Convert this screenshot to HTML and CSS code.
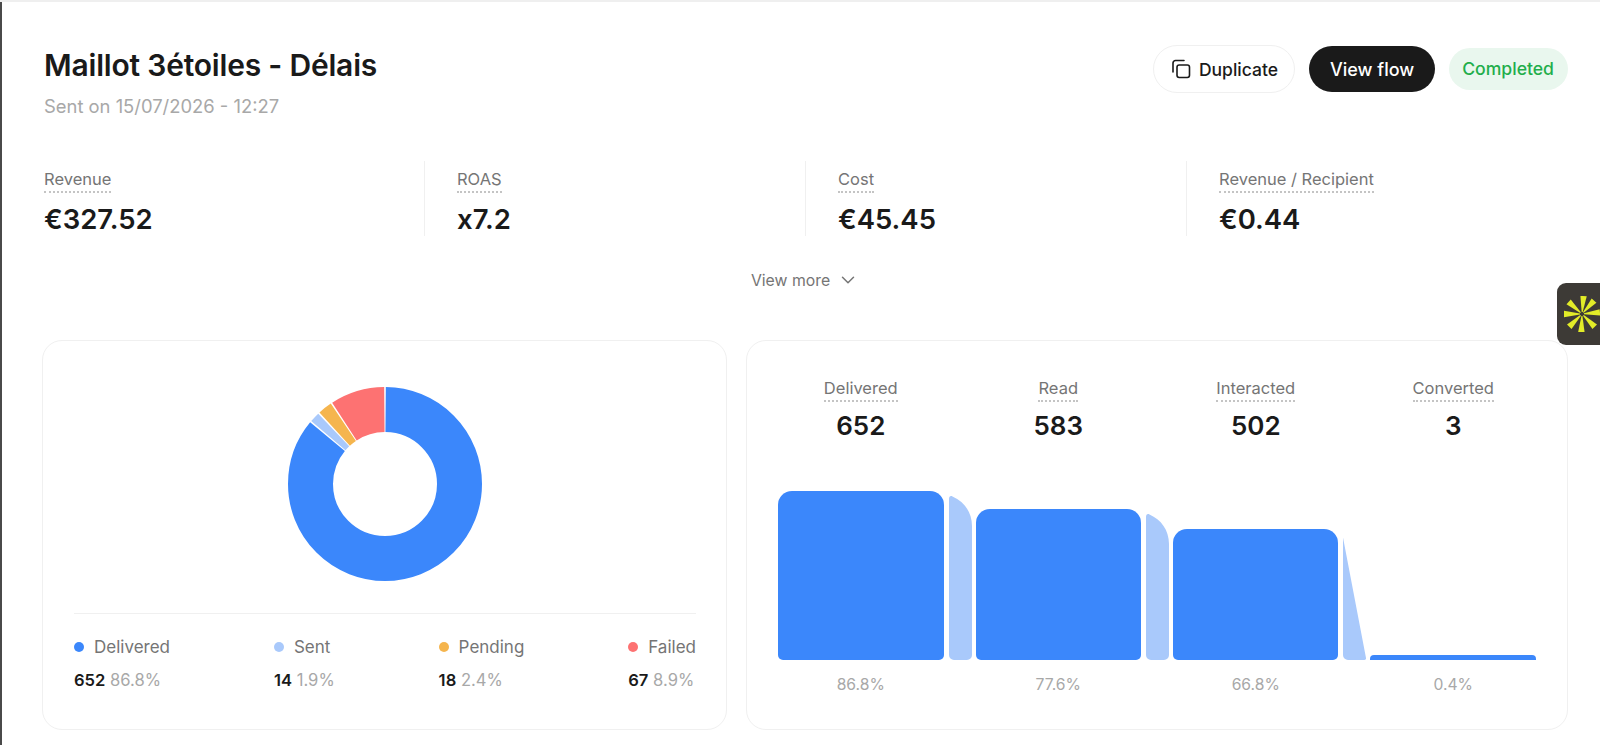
FILE: index.html
```html
<!DOCTYPE html>
<html lang="en">
<head>
    <meta charset="UTF-8">
    <meta name="viewport" content="width=device-width, initial-scale=1.0">
    <title>Maillot 3étoiles - Délais</title>
    <link rel="stylesheet" href="styles.css">
</head>
<body>
    <div class="page">
        <header class="campaign-header">
            <div>
                <h1>Maillot 3étoiles - Délais</h1>
                <p class="sent-on">Sent on 15/07/2026 - 12:27</p>
            </div>
            <div class="header-actions">
                <button class="btn btn-light">
                    <svg class="copy-icon" viewBox="0 0 20 20" fill="none" stroke="currentColor" stroke-width="1.6" stroke-linejoin="round" stroke-linecap="round">
                        <rect x="6" y="6" width="12.5" height="12.5" rx="2.2"></rect>
                        <path d="M2 13V4a2.5 2.5 0 0 1 2.5-2.5H13"></path>
                    </svg>
                    Duplicate
                </button>
                <button class="btn btn-dark">View flow</button>
                <span class="status-pill">Completed</span>
            </div>
        </header>

        <section class="stats">
            <div class="stat">
                <div><span class="dotted-label">Revenue</span></div>
                <div class="stat-value">€327.52</div>
            </div>
            <div class="stat">
                <div><span class="dotted-label">ROAS</span></div>
                <div class="stat-value">x7.2</div>
            </div>
            <div class="stat">
                <div><span class="dotted-label">Cost</span></div>
                <div class="stat-value">€45.45</div>
            </div>
            <div class="stat">
                <div><span class="dotted-label">Revenue / Recipient</span></div>
                <div class="stat-value">€0.44</div>
            </div>
        </section>

        <div class="view-more">
            View more
            <svg class="chevron" viewBox="0 0 14 8" fill="none" stroke="currentColor" stroke-width="1.5" stroke-linecap="round" stroke-linejoin="round">
                <path d="M1.5 1.2 7 6.7l5.5-5.5"></path>
            </svg>
        </div>

        <div class="cards">
            <section class="card card-donut">
                <svg class="donut" viewBox="0 0 194 194">
                    <g fill="none" stroke-width="45" transform="rotate(-90 97 97)">
                        <circle cx="97" cy="97" r="74.5" pathLength="360" stroke="#3b87fb" stroke-dasharray="309 51" stroke-dashoffset="-0.5"></circle>
                        <circle cx="97" cy="97" r="74.5" pathLength="360" stroke="#a9c9fb" stroke-dasharray="6 354" stroke-dashoffset="-310.5"></circle>
                        <circle cx="97" cy="97" r="74.5" pathLength="360" stroke="#f5b54e" stroke-dasharray="8.5 351.5" stroke-dashoffset="-317.5"></circle>
                        <circle cx="97" cy="97" r="74.5" pathLength="360" stroke="#fd7272" stroke-dasharray="32.5 327.5" stroke-dashoffset="-327"></circle>
                    </g>
                </svg>
                <div class="legend">
                    <div class="legend-item">
                        <div class="legend-name"><span class="dot dot-delivered"></span>Delivered</div>
                        <div class="legend-nums"><strong>652</strong> <span>86.8%</span></div>
                    </div>
                    <div class="legend-item">
                        <div class="legend-name"><span class="dot dot-sent"></span>Sent</div>
                        <div class="legend-nums"><strong>14</strong> <span>1.9%</span></div>
                    </div>
                    <div class="legend-item">
                        <div class="legend-name"><span class="dot dot-pending"></span>Pending</div>
                        <div class="legend-nums"><strong>18</strong> <span>2.4%</span></div>
                    </div>
                    <div class="legend-item">
                        <div class="legend-name"><span class="dot dot-failed"></span>Failed</div>
                        <div class="legend-nums"><strong>67</strong> <span>8.9%</span></div>
                    </div>
                </div>
            </section>

            <section class="card card-funnel">
                <div class="funnel-grid">
                    <div class="funnel-head">
                        <span class="dotted-label">Delivered</span>
                        <div class="funnel-value">652</div>
                    </div>
                    <div class="funnel-head">
                        <span class="dotted-label">Read</span>
                        <div class="funnel-value">583</div>
                    </div>
                    <div class="funnel-head">
                        <span class="dotted-label">Interacted</span>
                        <div class="funnel-value">502</div>
                    </div>
                    <div class="funnel-head">
                        <span class="dotted-label">Converted</span>
                        <div class="funnel-value">3</div>
                    </div>
                </div>

                <svg class="funnel-chart" viewBox="0 0 758 170">
                    <g fill="#3b87fb">
                        <path d="M14 1H152a14 14 0 0 1 14 14V165a5 5 0 0 1-5 5H5a5 5 0 0 1-5-5V15A14 14 0 0 1 14 1Z"></path>
                        <path d="M212 19H349a14 14 0 0 1 14 14V165a5 5 0 0 1-5 5H203a5 5 0 0 1-5-5V33a14 14 0 0 1 14-14Z"></path>
                        <path d="M409 39H546a14 14 0 0 1 14 14V165a5 5 0 0 1-5 5H400a5 5 0 0 1-5-5V53a14 14 0 0 1 14-14Z"></path>
                        <path d="M596 165H754a4 4 0 0 1 4 4v1H592v-1a4 4 0 0 1 4-4Z"></path>
                    </g>
                    <g fill="#a9c9fb">
                        <path d="M171 9C171 6.500 172.500 5.500 174.500 6.500C186 11.500 194 22 194 36V165a5 5 0 0 1-5 5H176a5 5 0 0 1-5-5Z"></path>
                        <path d="M368 27C368 24.500 369.500 23.500 371.500 24.500C383 29.500 391 40 391 54V165a5 5 0 0 1-5 5H373a5 5 0 0 1-5-5Z"></path>
                        <path d="M565 47.500L588 168a1.700 1.700 0 0 1-1.700 2H570a5 5 0 0 1-5-5Z"></path>
                    </g>
                </svg>

                <div class="funnel-grid funnel-rates">
                    <span>86.8%</span>
                    <span>77.6%</span>
                    <span>66.8%</span>
                    <span>0.4%</span>
                </div>
            </section>
        </div>
    </div>

    <aside class="side-widget">
        <svg class="side-logo" viewBox="-18 -18 36 36" fill="#e2ec28">
            <path d="M-3.200-18 3.200-18 0.500-2-0.500-2Z" transform="rotate(5)"></path>
            <path d="M-3.200-18 3.200-18 0.500-2-0.500-2Z" transform="rotate(42)"></path>
            <path d="M-3.200-18 3.200-18 0.500-2-0.500-2Z" transform="rotate(85)"></path>
            <path d="M-3.200-18 3.200-18 0.500-2-0.500-2Z" transform="rotate(135)"></path>
            <path d="M-3.200-18 3.200-18 0.500-2-0.500-2Z" transform="rotate(182)"></path>
            <path d="M-3.200-18 3.200-18 0.500-2-0.500-2Z" transform="rotate(225)"></path>
            <path d="M-3.200-18 3.200-18 0.500-2-0.500-2Z" transform="rotate(270)"></path>
            <path d="M-3.200-18 3.200-18 0.500-2-0.500-2Z" transform="rotate(312)"></path>
        </svg>
    </aside>
</body>
</html>
```

FILE: styles.css
```css
:root {
    --text-color: #1a1a1a;
    --muted-color: #757575;
    --faint-color: #a8a8a8;
    --line-color: #f0f0f0;
}

* {
    margin: 0;
    padding: 0;
    box-sizing: border-box;
    font-family: 'Inter', sans-serif;
}

html, body {
    height: 745px;
    overflow: hidden;
}

body {
    background-color: #fff;
    color: var(--text-color);
    border-top: 2px solid #efefef;
}

.page {
    height: 743px;
    padding: 0 32px 0 40px;
    border-left: 2px solid #4a4a4a;
}

.campaign-header {
    display: flex;
    justify-content: space-between;
    align-items: flex-start;
    padding-top: 43px;
    padding-left: 2px;
}

h1 {
    font-size: 30px;
    line-height: 40px;
    font-weight: 600;
    letter-spacing: -0.2px;
}

.sent-on {
    margin-top: 9px;
    font-size: 18.4px;
    line-height: 24px;
    color: var(--faint-color);
}

.header-actions {
    display: flex;
    align-items: center;
    gap: 14px;
    height: 48px;
}

.btn {
    display: flex;
    align-items: center;
    border-radius: 24px;
    font-weight: 500;
    cursor: pointer;
}

.btn-light {
    gap: 8px;
    height: 48px;
    padding: 0 16px 0 17px;
    background: #fff;
    border: 1px solid #f0f0f0;
    color: var(--text-color);
    font-size: 17.5px;
}

.copy-icon {
    width: 20px;
    height: 20px;
}

.btn-dark {
    height: 46px;
    padding: 0 21px;
    background: #1a1a1a;
    border: none;
    color: #fff;
    font-size: 18px;
}

.status-pill {
    display: flex;
    align-items: center;
    height: 42px;
    padding: 0 14px 1px 13px;
    border-radius: 21px;
    background: #e9f7ee;
    color: #1fae4b;
    font-size: 17.6px;
    font-weight: 500;
}

.stats {
    display: grid;
    grid-template-columns: repeat(4, 1fr);
    margin-top: 43px;
    margin-left: 2px;
}

.stat {
    height: 75px;
    padding-top: 8px;
    padding-left: 32px;
    border-right: 1px solid var(--line-color);
}

.stat:first-child {
    padding-left: 0;
}

.stat:last-child {
    border-right: none;
}

.dotted-label {
    display: inline-block;
    padding-bottom: 2px;
    border-bottom: 2px dotted #c4c4c4;
    font-size: 16.5px;
    line-height: 20px;
    color: var(--muted-color);
}

.stat-value {
    margin-top: 9px;
    font-size: 27.5px;
    line-height: 34px;
    font-weight: 600;
}

.view-more {
    display: flex;
    justify-content: center;
    align-items: center;
    gap: 11px;
    margin-top: 32px;
    padding-right: 4px;
    height: 24px;
    font-size: 15.8px;
    color: var(--muted-color);
}

.chevron {
    width: 14px;
    height: 8px;
}

.cards {
    display: grid;
    grid-template-columns: 685px 822px;
    gap: 19px;
    margin-top: 48px;
}

.card {
    height: 390px;
    border: 1px solid var(--line-color);
    border-radius: 20px;
}

.card-donut {
    display: flex;
    flex-direction: column;
    align-items: center;
    padding: 46px 30px 0 31px;
}

.donut {
    display: block;
    width: 194px;
    height: 194px;
}

.legend {
    display: flex;
    justify-content: space-between;
    align-self: stretch;
    margin-top: 32px;
    padding-top: 21px;
    border-top: 1px solid var(--line-color);
}

.legend-name {
    display: flex;
    align-items: center;
    gap: 10px;
    font-size: 17px;
    line-height: 24px;
    color: var(--muted-color);
}

.dot {
    width: 10px;
    height: 10px;
    border-radius: 50%;
}

.dot-delivered { background: #3b87fb; }
.dot-sent { background: #a9c9fb; }
.dot-pending { background: #f5b54e; }
.dot-failed { background: #fd7272; }

.legend-nums {
    margin-top: 9px;
    font-size: 16.6px;
    line-height: 24px;
}

.legend-nums strong {
    font-weight: 600;
}

.legend-nums span {
    color: var(--faint-color);
}

.card-funnel {
    padding: 37px 31px 0 31px;
}

.funnel-grid {
    display: grid;
    grid-template-columns: repeat(4, 1fr);
    column-gap: 32px;
    text-align: center;
}

.funnel-value {
    margin-top: 7px;
    font-size: 26px;
    line-height: 34px;
    font-weight: 600;
}

.funnel-chart {
    display: block;
    width: 758px;
    height: 170px;
    margin-top: 47px;
}

.funnel-rates {
    margin-top: 15px;
    font-size: 15.7px;
    line-height: 20px;
    color: var(--faint-color);
}

.side-widget {
    position: absolute;
    top: 283px;
    right: 0;
    display: flex;
    align-items: center;
    width: 43px;
    height: 62px;
    padding-left: 7px;
    background: #3d3a36;
    border-radius: 9px 0 0 9px;
    overflow: hidden;
}

.side-logo {
    flex: none;
    width: 36px;
    height: 36px;
}
```
